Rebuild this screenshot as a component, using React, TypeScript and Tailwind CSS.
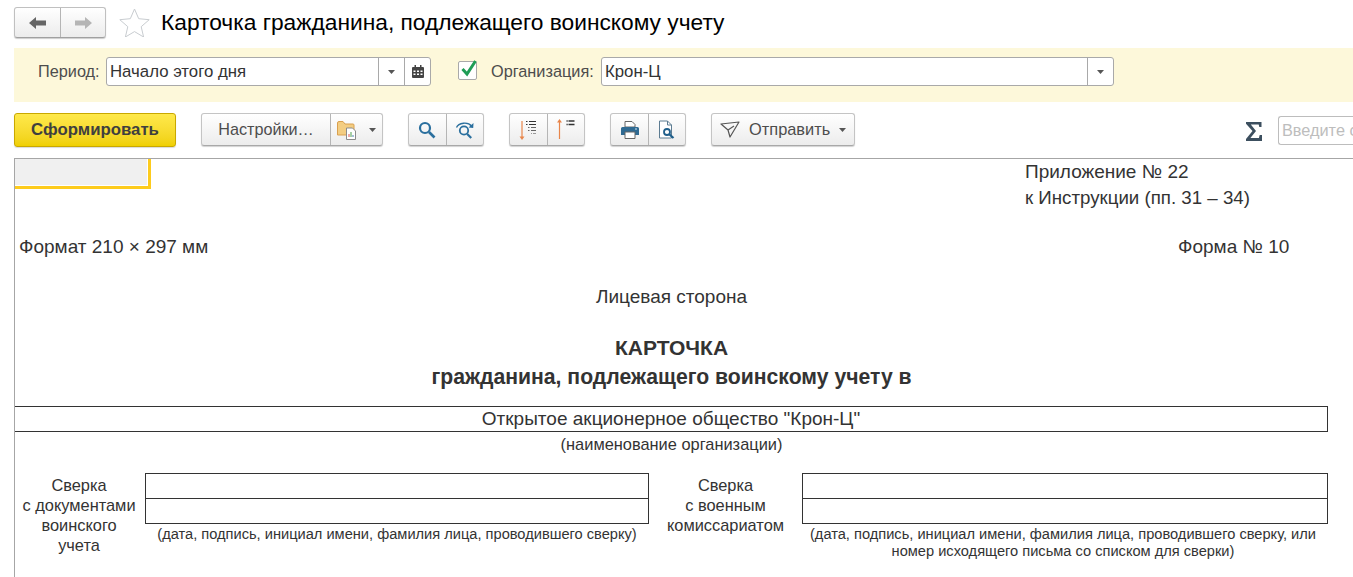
const font = "font-['Liberation_Sans',Arial,sans-serif]";

function Caret() {
  return <svg width="7" height="4" viewBox="0 0 7 4"><path d="M0 0h7L3.500 4z" fill="#555" /></svg>;
}

function Seg({ w, children, last }: { w: number; children?: React.ReactNode; last?: boolean }) {
  return (
    <div style={{ width: w }} className={`h-full flex items-center justify-center ${last ? "" : "border-r border-[#b5b5b5]"}`}>
      {children}
    </div>
  );
}

function Group({ children, className = "" }: { children: React.ReactNode; className?: string }) {
  return (
    <div className={`h-[33px] flex rounded-[3px] border border-[#c4c4c4] border-b-[#a8a8a8] bg-gradient-to-b from-white to-[#ececec] shadow-[0_1px_1px_rgba(0,0,0,0.18)] shrink-0 ${className}`}>
      {children}
    </div>
  );
}

function Search() {
  return (
    <svg className="-ml-[2px]" width="18" height="18" viewBox="0 0 18 18" fill="none">
      <circle cx="7" cy="7" r="5" stroke="#2a6f9e" strokeWidth="2.200" />
      <path d="M11 11l5.500 5.500" stroke="#2a6f9e" strokeWidth="2.600" />
    </svg>
  );
}

function SearchNext() {
  return (
    <svg width="20" height="20" viewBox="0 0 20 20" fill="none">
      <circle cx="9" cy="10.500" r="4.200" stroke="#2a6f9e" strokeWidth="1.800" />
      <path d="M12.200 14l4 4" stroke="#2a6f9e" strokeWidth="2.200" />
      <path d="M1.500 7.500C3.500 2.500 13 1.500 16.500 6" stroke="#2a6f9e" strokeWidth="1.400" />
      <path d="M18.500 3l-.3 5-4.700-.6z" fill="#2a6f9e" />
    </svg>
  );
}

function SortDown() {
  return (
    <svg className="-ml-[1px]" width="20" height="22" viewBox="0 0 20 22" fill="none">
      <path d="M4 2v17" stroke="#e8854a" strokeWidth="1.200" />
      <path d="M1.500 17.500h5L4 21z" fill="#e8854a" />
      <path d="M8 2.500h1.500M11 2.500h7M8 5.500h1.500M11 5.500h7" stroke="#333" strokeWidth="1.200" />
      <path d="M10 8.500h1.500M13 8.500h5M10 11.500h1.500M13 11.500h5" stroke="#666" strokeWidth="1.200" />
      <path d="M13 14.500h1M15 14.500h3" stroke="#999" strokeWidth="1.200" />
    </svg>
  );
}

function SortUp() {
  return (
    <svg className="-mt-[1px]" width="20" height="22" viewBox="0 0 20 22" fill="none">
      <path d="M3.500 3v18" stroke="#e8854a" strokeWidth="1.200" />
      <path d="M1 4.500h5L3.500 1z" fill="#e8854a" />
      <path d="M10.500 3h1.200M12.500 3h6M10.500 6.500h1.200M12.500 6.500h6" stroke="#333" strokeWidth="1.400" />
    </svg>
  );
}

function Printer() {
  return (
    <svg width="20" height="20" viewBox="0 0 20 20" fill="none">
      <path d="M5 1.500h7l3 3V7H5z" fill="#fff" stroke="#666" />
      <path d="M1 8.500a1.500 1.500 0 0 1 1.500-1.500h15A1.500 1.500 0 0 1 19 8.500V15H1z" fill="#2f6a92" />
      <path d="M5 12h10v6.500H5z" fill="#fff" stroke="#666" />
      <path d="M15 9h2" stroke="#cfe3ef" strokeWidth="1.200" />
    </svg>
  );
}

function Preview() {
  return (
    <svg width="18" height="20" viewBox="0 0 18 20" fill="none">
      <path d="M1.500 1h8l4 4v13h-12z" fill="#fff" stroke="#5d7c92" />
      <path d="M9.500 1v4h4" stroke="#5d7c92" />
      <circle cx="9" cy="12" r="3" fill="#fff" stroke="#1f5f8b" strokeWidth="1.800" />
      <path d="M11.200 14.200l4.300 3.800" stroke="#1f5f8b" strokeWidth="2.200" />
    </svg>
  );
}

function Send() {
  return (
    <svg width="20" height="17" viewBox="0 0 20 17" fill="none" stroke="#555" strokeWidth="1.200" strokeLinejoin="round">
      <path d="M1 3l18-2-9 15-2-7z" />
      <path d="M8 9l6-4" />
    </svg>
  );
}

function Folder() {
  return (
    <svg width="22" height="20" viewBox="0 0 22 20" fill="none">
      <path d="M.5 3a1.500 1.500 0 0 1 1.500-1.500h4L8 4h8a1 1 0 0 1 1 1v10H.5z" fill="#f3cd82" stroke="#d9a04f" />
      <path d="M9.500 8h6l3 3v8.500h-9z" fill="#fff" stroke="#8b8b8b" />
      <path d="M12 17v-3" stroke="#d9534f" strokeWidth="1" />
      <path d="M14 17v-5" stroke="#4f9e4f" strokeWidth="1" />
      <path d="M16 17v-2" stroke="#4f7fb5" strokeWidth="1" />
    </svg>
  );
}

function Calendar() {
  return (
    <svg width="12" height="13" viewBox="0 0 12 13">
      <path d="M1 2h10a1 1 0 0 1 1 1v9a1 1 0 0 1-1 1H1a1 1 0 0 1-1-1V3a1 1 0 0 1 1-1z" fill="#444" />
      <path d="M2.500 0h1.500v3H2.500zM8 0h1.500v3H8z" fill="#444" />
      <path d="M1.500 5.500h2v1.500h-2zM5 5.500h2v1.500H5zM8.500 5.500h2v1.500h-2zM1.500 8.500h2v1.500h-2zM5 8.500h2v1.500H5zM8.500 8.500h2v1.500h-2z" fill="#fff" />
    </svg>
  );
}

function Sigma() {
  return (
    <svg width="16" height="19" viewBox="0 0 16 19">
      <path d="M0 0h15.500v5h-2.200l-.6-2.400H4.800l5.200 6.500-5.600 7h8.500l.8-3h2.300V19H0v-2l6.500-7.900L0 1.800z" fill="#3c4f5f" />
    </svg>
  );
}

function Field({ w, text, children }: { w: number; text: string; children: React.ReactNode }) {
  return (
    <div style={{ width: w }} className="h-[29px] flex bg-white border border-[#a9a9a9] rounded-[3px] shrink-0">
      <div className="flex-1 pl-[3px] text-[16.800px] leading-[27px] text-[#333] whitespace-nowrap">{text}</div>
      {children}
    </div>
  );
}

function SignBox() {
  return (
    <div className="border border-[#333] h-[51px] flex flex-col">
      <div className="h-[25px] border-b border-[#333]" />
    </div>
  );
}

export default function App() {
  return (
    <div className={`${font} w-[1353px] h-[577px] overflow-hidden bg-white text-[#333] flex flex-col`}>
      <div className="h-[48px] pl-[14px] pt-[7px] flex items-start shrink-0">
        <div className="h-[31px] flex rounded-[3px] border border-[#c0c0c0] border-b-[#a0a0a0] bg-gradient-to-b from-white to-[#ececec] shadow-[0_1px_1px_rgba(0,0,0,0.2)]">
          <Seg w={46}>
            <svg width="17" height="12" viewBox="0 0 17 12"><path d="M0 6l7-6v3.500h10v5H7V12z" fill="#666" /></svg>
          </Seg>
          <Seg w={44} last>
            <svg width="17" height="12" viewBox="0 0 17 12"><path d="M17 6l-7-6v3.500H0v5h10V12z" fill="#b5b5b5" /></svg>
          </Seg>
        </div>
        <svg className="ml-[13px] mt-[1px]" width="31" height="29" viewBox="0 0 31 29" fill="none">
          <path d="M15.500 1l4.200 9.700 10.500 1-8 7 2.400 10.300-9.100-5.400-9.100 5.400 2.400-10.300-8-7 10.500-1z" stroke="#c8ccd0" strokeWidth="1" fill="#fff" />
        </svg>
        <div className="ml-[11px] text-[22.750px] leading-[31px] text-black whitespace-nowrap">Карточка гражданина, подлежащего воинскому учету</div>
      </div>

      <div className="ml-[14px] h-[54px] bg-[#fdf8da] flex items-start pt-[9px] shrink-0">
        <div className="ml-[24px] w-[68px] text-[16.300px] leading-[29px] text-[#4d4d4d] whitespace-nowrap">Период:</div>
        <Field w={325} text="Начало этого дня">
          <div className="w-[26px] border-l border-[#a9a9a9] flex items-center justify-center"><Caret /></div>
          <div className="w-[26px] border-l border-[#a9a9a9] flex items-center justify-center"><Calendar /></div>
        </Field>
        <div className="ml-[27px] mt-[4px] w-[19px] h-[19px] border border-[#a9a9a9] rounded-[2px] bg-white relative shrink-0">
          <svg className="absolute left-[1px] top-[-4px]" width="18" height="20" viewBox="0 0 18 20" fill="none">
            <path d="M2.500 11l4.500 5 8.500-13" stroke="#1f9d55" strokeWidth="3" />
          </svg>
        </div>
        <div className="ml-[14px] w-[110px] text-[16.300px] leading-[29px] text-[#4d4d4d] whitespace-nowrap">Организация:</div>
        <Field w={513} text="Крон-Ц">
          <div className="w-[26px] border-l border-[#a9a9a9] flex items-center justify-center"><Caret /></div>
        </Field>
      </div>

      <div className="h-[57px] ml-[14px] pt-[11px] flex items-start shrink-0 border-b border-[#a6a6a6]">
        <div className="w-[162px] h-[34px] rounded-[3px] border border-[#c9a800] bg-gradient-to-b from-[#ffe94a] to-[#f0d000] flex items-center justify-center text-[16.800px] font-bold text-[#3f3f3f] shadow-[0_1px_1px_rgba(0,0,0,0.15)] shrink-0 whitespace-nowrap">Сформировать</div>
        <Group className="ml-[25px]">
          <Seg w={129}><span className="text-[16.200px] text-[#4d4d4d] whitespace-nowrap">Настройки…</span></Seg>
          <Seg w={51} last><div className="flex items-center gap-[10px] -ml-[1px]"><Folder /><Caret /></div></Seg>
        </Group>
        <Group className="ml-[25px]">
          <Seg w={38}><Search /></Seg>
          <Seg w={36} last><SearchNext /></Seg>
        </Group>
        <Group className="ml-[25px]">
          <Seg w={38}><SortDown /></Seg>
          <Seg w={36} last><SortUp /></Seg>
        </Group>
        <Group className="ml-[25px]">
          <Seg w={38}><Printer /></Seg>
          <Seg w={36} last><Preview /></Seg>
        </Group>
        <Group className="ml-[25px]">
          <div className="w-[142px] flex items-center pl-[8px] gap-[9px]">
            <Send />
            <span className="text-[16.400px] text-[#4d4d4d] whitespace-nowrap">Отправить</span>
            <Caret />
          </div>
        </Group>
        <div className="ml-[391px] mt-[9px] shrink-0"><Sigma /></div>
        <div className="ml-[16px] mt-[3px] w-[75px] h-[29px] border border-[#bdbdbd] rounded-l-[3px] border-r-0 pl-[3px] text-[16.300px] leading-[27px] text-[#bdbdbd] whitespace-nowrap overflow-hidden shrink-0">Введите с</div>
      </div>

      <div className="ml-[14px] flex-1 border-l border-[#a6a6a6] text-[19px] text-[#333] flex flex-col">
        <div className="flex">
          <div className="w-[136px] h-[30px] bg-[#f0f0f0] border-r-[3px] border-b-[3px] border-[#fdcb1d] shadow-[inset_-1px_-1px_0_#fff] shrink-0" />
          <div className="ml-[874px] whitespace-nowrap">
            <div className="leading-[26px]">Приложение № 22</div>
            <div className="leading-[26px] text-[18.700px]">к Инструкции (пп. 31 – 34)</div>
          </div>
        </div>
        <div className="flex pl-[4px] mt-[23px] leading-[26px]">
          <div className="w-[1159px]">Формат 210 × 297 мм</div>
          <div className="whitespace-nowrap">Форма № 10</div>
        </div>
        <div className="w-[1313px] text-center mt-[24px] leading-[26px]">Лицевая сторона</div>
        <div className="w-[1313px] text-center mt-[24px] leading-[28px] font-bold text-[21px]">
          <div>КАРТОЧКА</div>
          <div className="mt-[1px] text-[21.200px]">гражданина, подлежащего воинскому учету в</div>
        </div>
        <div className="w-[1313px] mt-[15px] h-[26px] border-t border-b border-r border-[#333] text-center leading-[24px]">Открытое акционерное общество "Крон-Ц"</div>
        <div className="w-[1313px] text-center text-[16.400px] leading-[24px]">(наименование организации)</div>
        <div className="mt-[17px] flex w-[1313px]">
          <div className="w-[130px] pr-[2px] text-center text-[16.400px] leading-[20px] pt-[2px] shrink-0 whitespace-nowrap">Сверка<br />с документами<br />воинского<br />учета</div>
          <div className="w-[504px] shrink-0">
            <SignBox />
            <div className="text-center text-[14.630px] leading-[20px] whitespace-nowrap">(дата, подпись, инициал имени, фамилия лица, проводившего сверку)</div>
          </div>
          <div className="w-[153px] text-center text-[16.400px] leading-[20px] pt-[2px] shrink-0 whitespace-nowrap">Сверка<br />с военным<br />комиссариатом</div>
          <div className="w-[526px] shrink-0">
            <SignBox />
            <div className="pr-[4px] pt-[2px] text-center text-[14.630px] leading-[17px] whitespace-nowrap">(дата, подпись, инициал имени, фамилия лица, проводившего сверку, или<br />номер исходящего письма со списком для сверки)</div>
          </div>
        </div>
      </div>
    </div>
  );
}
